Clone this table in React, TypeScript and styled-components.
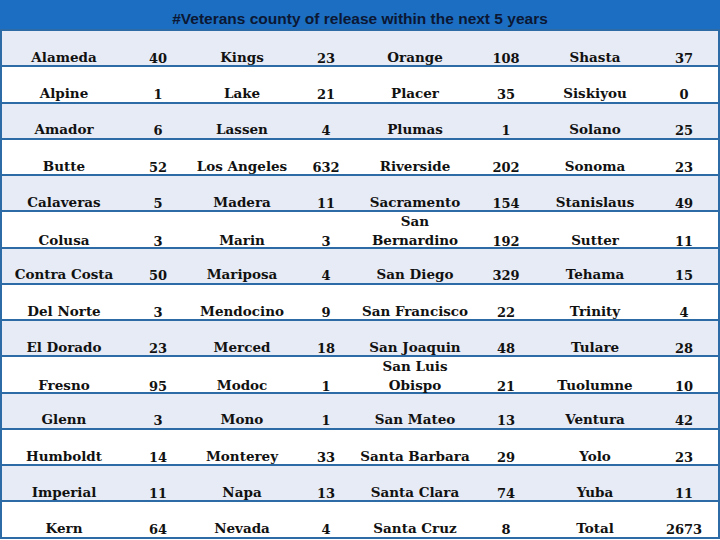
import React from "react";
import styled, { createGlobalStyle } from "styled-components";

const Global = createGlobalStyle`
  html, body { margin: 0; padding: 0; background: #ffffff; }
  body { width: 720px; height: 540px; overflow: hidden; }
`;

const Sheet = styled.div`
  width: 720px;
  display: flex;
  flex-direction: column;
  font-family: "DejaVu Serif", "Liberation Serif", serif;
  font-weight: bold;
  font-size: 13.5px;
  color: #111111;
`;

const Header = styled.div`
  box-sizing: border-box;
  height: 31px;
  padding-bottom: 1px;
  display: flex;
  align-items: flex-end;
  justify-content: center;
  background: #1b6ec2;
  color: #0b1733;
  font-family: "Liberation Sans", Arial, sans-serif;
  font-weight: bold;
  font-size: 15.5px;
  border-bottom: 2px solid #2c6ba5;
`;

const Row = styled.div<{ $shade: boolean }>`
  box-sizing: border-box;
  height: 36.25px;
  display: grid;
  grid-template-columns: 124px 64px 104px 64px 114px 68px 110px 68px;
  background: ${(p) => (p.$shade ? "#e7ebf5" : "#ffffff")};
  border-left: 2px solid #2c6ba5;
  border-right: 2px solid #2c6ba5;
  border-bottom: 2px solid #2c6ba5;
`;

const Cell = styled.div`
  display: flex;
  align-items: flex-end;
  justify-content: center;
  text-align: center;
  line-height: 18.5px;
  white-space: nowrap;
  & > span {
    margin-bottom: -1px;
  }
`;

const Num = styled(Cell)`
  font-size: 13px;
  & > span {
    margin-bottom: -3px;
  }
`;

type Entry = [string, string];

const rows: Entry[][] = [
  [["Alameda", "40"], ["Kings", "23"], ["Orange", "108"], ["Shasta", "37"]],
  [["Alpine", "1"], ["Lake", "21"], ["Placer", "35"], ["Siskiyou", "0"]],
  [["Amador", "6"], ["Lassen", "4"], ["Plumas", "1"], ["Solano", "25"]],
  [["Butte", "52"], ["Los Angeles", "632"], ["Riverside", "202"], ["Sonoma", "23"]],
  [["Calaveras", "5"], ["Madera", "11"], ["Sacramento", "154"], ["Stanislaus", "49"]],
  [["Colusa", "3"], ["Marin", "3"], ["San\nBernardino", "192"], ["Sutter", "11"]],
  [["Contra Costa", "50"], ["Mariposa", "4"], ["San Diego", "329"], ["Tehama", "15"]],
  [["Del Norte", "3"], ["Mendocino", "9"], ["San Francisco", "22"], ["Trinity", "4"]],
  [["El Dorado", "23"], ["Merced", "18"], ["San Joaquin", "48"], ["Tulare", "28"]],
  [["Fresno", "95"], ["Modoc", "1"], ["San Luis\nObispo", "21"], ["Tuolumne", "10"]],
  [["Glenn", "3"], ["Mono", "1"], ["San Mateo", "13"], ["Ventura", "42"]],
  [["Humboldt", "14"], ["Monterey", "33"], ["Santa Barbara", "29"], ["Yolo", "23"]],
  [["Imperial", "11"], ["Napa", "13"], ["Santa Clara", "74"], ["Yuba", "11"]],
  [["Kern", "64"], ["Nevada", "4"], ["Santa Cruz", "8"], ["Total", "2673"]],
];

const renderName = (name: string) =>
  name.split("\n").map((part, i, arr) => (
    <React.Fragment key={i}>
      {part}
      {i < arr.length - 1 && <br />}
    </React.Fragment>
  ));

export default function App() {
  return (
    <>
      <Global />
      <Sheet>
        <Header>#Veterans county of release within the next 5 years</Header>
        {rows.map((row, r) => (
          <Row key={r} $shade={r % 2 === 0}>
            {row.map(([name, num], c) => (
              <React.Fragment key={c}>
                <Cell>
                  <span>{renderName(name)}</span>
                </Cell>
                <Num>
                  <span>{num}</span>
                </Num>
              </React.Fragment>
            ))}
          </Row>
        ))}
      </Sheet>
    </>
  );
}
